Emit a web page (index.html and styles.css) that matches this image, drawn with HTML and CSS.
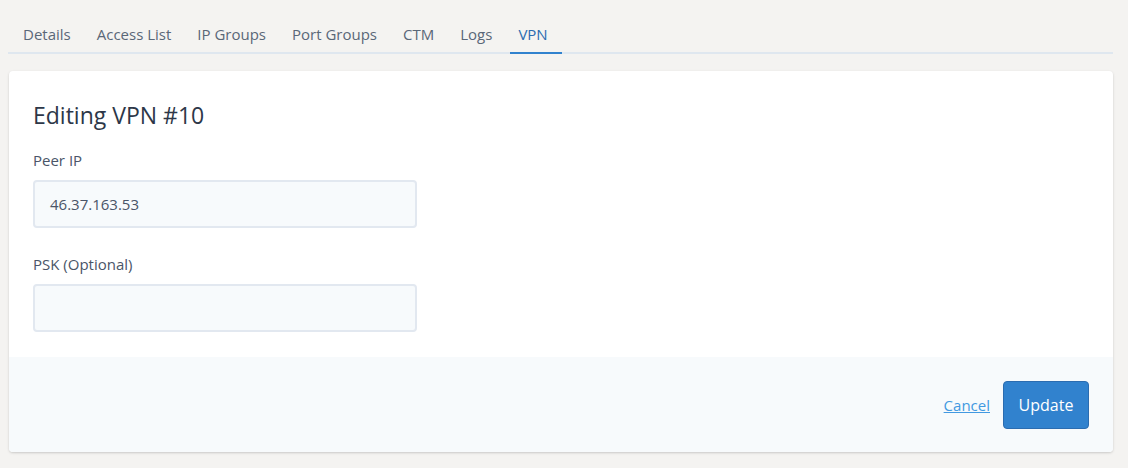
FILE: index.html
```html
<!DOCTYPE html>
<html>
<head>
<meta charset="utf-8">
<link rel="stylesheet" href="styles.css">
</head>
<body>
<div class="page">
  <nav class="tabs">
    <a class="tab">Details</a>
    <a class="tab">Access List</a>
    <a class="tab">IP Groups</a>
    <a class="tab">Port Groups</a>
    <a class="tab">CTM</a>
    <a class="tab">Logs</a>
    <a class="tab active">VPN</a>
  </nav>
  <div class="card">
    <div class="card-body">
      <h2 class="title">Editing VPN #10</h2>
      <div class="field">
        <label class="label">Peer IP</label>
        <div class="input">46.37.163.53</div>
      </div>
      <div class="field">
        <label class="label">PSK (Optional)</label>
        <div class="input"></div>
      </div>
    </div>
    <div class="card-footer">
      <a class="cancel">Cancel</a>
      <button class="btn">Update</button>
    </div>
  </div>
</div>
</body>
</html>
```

FILE: styles.css
```css
* { box-sizing: border-box; }
html, body { margin: 0; padding: 0; }
body {
  background: #f4f3f1;
  font-family: "Open Sans", "Noto Sans", sans-serif;
  color: #4a5568;
  width: 1128px;
  height: 468px;
  overflow: hidden;
}
.page {
  padding: 17px 15px 0 8px;
}
.tabs {
  display: flex;
  gap: 6px;
  padding-left: 7px;
  border-bottom: 2px solid #dfe7ef;
  height: 37px;
}
.tab {
  font-size: 15px;
  color: #5a6778;
  padding: 7px 12px 0 8px;
  height: 37px;
  margin-bottom: -2px;
  border-bottom: 2px solid transparent;
}
.tab.active {
  color: #2b6cb0;
  padding-right: 14px;
  border-bottom-color: #3182ce;
}
.card {
  margin-top: 17px;
  margin-left: 1px;
  background: #fff;
  border-radius: 4px;
  box-shadow: 0 1px 3px rgba(0,0,0,0.12), 0 1px 2px rgba(0,0,0,0.06);
  overflow: hidden;
  height: 381px;
}
.card-body {
  padding: 28px 24px 24px;
  height: 286px;
}
.title {
  margin: 0 0 19px;
  font-size: 23px;
  font-weight: 400;
  color: #2d3748;
  line-height: 32px;
}
.field { margin-bottom: 26px; }
.label {
  display: block;
  font-size: 15px;
  color: #4a5568;
  margin-bottom: 10px;
  line-height: 20px;
}
.input {
  width: 384px;
  height: 48px;
  background: #f7fafc;
  border: 2px solid #e2e8f0;
  border-radius: 4px;
  padding: 0 15px;
  font-size: 15px;
  line-height: 44px;
  color: #4a5568;
}
.card-footer {
  background: #f7fafc;
  height: 95px;
  display: flex;
  align-items: center;
  justify-content: flex-end;
  padding: 0 24px;
  gap: 13px;
}
.cancel {
  color: #4299e1;
  text-decoration: underline;
  font-size: 15px;
}
.btn {
  font-family: inherit;
  background: #3182ce;
  color: #fff;
  border: 1px solid #2b6cb0;
  border-radius: 4px;
  width: 86px;
  height: 48px;
  font-size: 16px;
}
```
